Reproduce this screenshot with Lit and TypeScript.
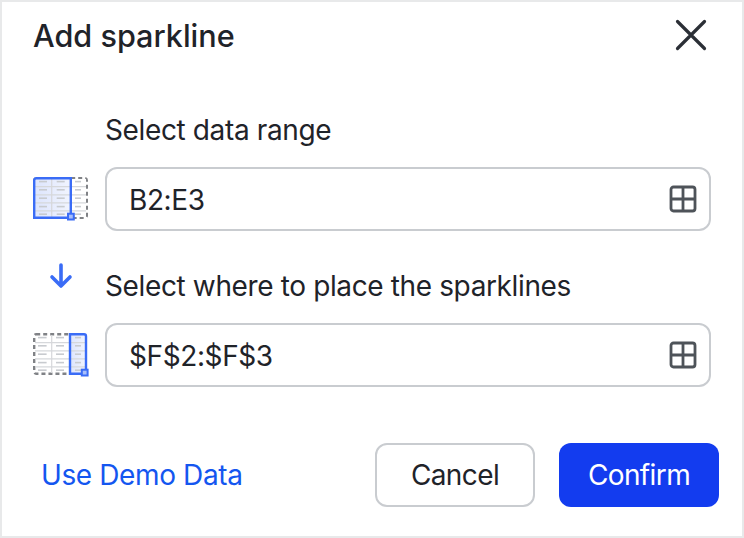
import { LitElement, html, css, svg } from "lit";
import { customElement } from "lit/decorators.js";

const B = "#3a6cf6";
const G = "#d6d8db";
const D = "#808286";
const T = "#c8cbcf";

const ROW_LINES = [9.6, 17.9, 25.9, 33.8];
const BAR_Y = [3.8, 12, 20.4, 28.8, 36.4];

function bars(xs: [number, number][]) {
  return xs.flatMap(([x, w]) =>
    BAR_Y.map((y) => svg`<rect x=${x} y=${y} width=${w} height="1.6" fill=${T}></rect>`)
  );
}

function sourceIcon() {
  return html`<svg class="sheet" width="56" height="44" viewBox="0 0 56 44" fill="none">
    <defs>
      <linearGradient id="tintA" x1="0" x2="1" y1="0" y2="0">
        <stop offset="0" stop-color="#dde5fd"></stop>
        <stop offset="1" stop-color="#f1f4fe"></stop>
      </linearGradient>
    </defs>
    <rect x="1.2" y="1.2" width="52.6" height="39.6" rx="2" stroke=${D} stroke-width="2.4" stroke-dasharray="4 3"></rect>
    <rect x="38" y="2" width="15" height="38" fill="#fff"></rect>
    <rect x="2" y="2" width="36" height="38" fill="url(#tintA)"></rect>
    ${ROW_LINES.map((y) => svg`<path d="M2 ${y}H53" stroke=${G} stroke-width="1.2"></path>`)}
    <path d="M18.7 2V40" stroke=${G} stroke-width="1.2"></path>
    ${bars([[6, 8], [23.7, 8], [42, 6]])}
    <path d="M3.2 1.2H37.8V40.8H1.2V3.2A2 2 0 0 1 3.2 1.2Z" stroke=${B} stroke-width="2.4"></path>
    <rect x="35" y="36.7" width="5.8" height="5.8" fill="#a9bffa" stroke=${B} stroke-width="2"></rect>
  </svg>`;
}

function targetIcon() {
  return html`<svg class="sheet" width="56" height="44" viewBox="0 0 56 44" fill="none">
    <defs>
      <linearGradient id="tintB" x1="0" x2="1" y1="0" y2="0">
        <stop offset="0" stop-color="#dde5fd"></stop>
        <stop offset="1" stop-color="#f1f4fe"></stop>
      </linearGradient>
    </defs>
    <rect x="1.2" y="1.2" width="51" height="39.6" rx="2" stroke=${D} stroke-width="2.4" stroke-dasharray="4 3"></rect>
    <rect x="37" y="2" width="16" height="38" fill="url(#tintB)"></rect>
    ${ROW_LINES.map((y) => svg`<path d="M2 ${y}H52.5" stroke=${G} stroke-width="1.2"></path>`)}
    <path d="M18.7 2V40" stroke=${G} stroke-width="1.2"></path>
    ${bars([[5, 8.6], [23, 8], [42, 6]])}
    <path d="M37 1.2H51A2 2 0 0 1 53 3.2V40.8H37Z" stroke=${B} stroke-width="2.4"></path>
    <rect x="48.8" y="36.7" width="5.8" height="5.8" fill="#a9bffa" stroke=${B} stroke-width="2"></rect>
  </svg>`;
}

const gridIcon = html`<svg class="grid" width="28" height="28" viewBox="0 0 28 28" fill="none">
  <rect x="2" y="2" width="24" height="24" rx="2.5" stroke="#4e5359" stroke-width="2.8"></rect>
  <path d="M14 2V26M2 14H26" stroke="#4e5359" stroke-width="2.8"></path>
</svg>`;

@customElement("app-root")
export class AppRoot extends LitElement {
  static styles = css`
    :host {
      display: block;
      width: 744px;
      height: 538px;
      font-family: Inter, "Liberation Sans", sans-serif;
      color: #1f2329;
    }
    .card {
      box-sizing: border-box;
      width: 744px;
      height: 538px;
      background: #fff;
      border: 2px solid #e8e9ea;
      display: flex;
      flex-direction: column;
      padding: 0 23px 29px 31px;
    }
    .head {
      display: flex;
      justify-content: space-between;
      align-items: center;
      height: 68px;
    }
    h1 {
      margin: 0;
      font-size: 30.6px;
      font-weight: 500;
      line-height: 40px;
    }
    .close {
      display: block;
      margin: 0 11px 3px 0;
    }
    .form {
      display: grid;
      grid-template-columns: 72px 606px;
      margin-top: 40px;
      align-items: center;
    }
    label {
      grid-column: 2;
      font-size: 28px;
      letter-spacing: -0.37px;
      line-height: 40px;
      height: 40px;
      margin-bottom: 17px;
    }
    .second {
      margin-top: 35px;
    }
    .down {
      display: block;
      align-self: start;
      justify-self: start;
      margin: 32px 0 0 16px;
    }
    .sheet {
      display: block;
    }
    .field {
      box-sizing: border-box;
      height: 64px;
      border: 2px solid #c9ccd0;
      border-radius: 12px;
      display: flex;
      align-items: center;
      justify-content: space-between;
      padding: 0 12px 0 22px;
      font-size: 28px;
      letter-spacing: -0.4px;
    }
    .field span {
      padding-top: 1px;
    }
    .grid {
      display: block;
    }
    .foot {
      margin-top: auto;
      display: flex;
      align-items: center;
    }
    .link {
      color: #1456f0;
      font-size: 28px;
      letter-spacing: -0.38px;
      margin-left: 8px;
    }
    .btns {
      margin-left: auto;
      display: flex;
      gap: 24px;
    }
    .btn {
      box-sizing: border-box;
      width: 160px;
      height: 64px;
      border-radius: 12px;
      font-size: 28px;
      letter-spacing: -0.6px;
      display: flex;
      align-items: center;
      justify-content: center;
    }
    .cancel {
      border: 2px solid #c9ccd0;
    }
    .confirm {
      background: #133cef;
      color: #fff;
    }
  `;

  render() {
    return html`<div class="card">
      <div class="head">
        <h1>Add sparkline</h1>
        <svg class="close" width="34" height="34" viewBox="0 0 34 34" fill="none">
          <path d="M3.5 3.5L30.5 30.5M30.5 3.5L3.5 30.5" stroke="#2b2f36" stroke-width="3.2" stroke-linecap="round"></path>
        </svg>
      </div>
      <div class="form">
        <label>Select data range</label>
        ${sourceIcon()}
        <div class="field"><span>B2:E3</span>${gridIcon}</div>
        <svg class="down" width="24" height="26" viewBox="0 0 24 26" fill="none">
          <path d="M12 2V23M3 14L12 23L21 14" stroke=${B} stroke-width="3.6" stroke-linecap="round" stroke-linejoin="round"></path>
        </svg>
        <label class="second">Select where to place the sparklines</label>
        ${targetIcon()}
        <div class="field"><span>$F$2:$F$3</span>${gridIcon}</div>
      </div>
      <div class="foot">
        <span class="link">Use Demo Data</span>
        <div class="btns">
          <div class="btn cancel">Cancel</div>
          <div class="btn confirm">Confirm</div>
        </div>
      </div>
    </div>`;
  }
}
